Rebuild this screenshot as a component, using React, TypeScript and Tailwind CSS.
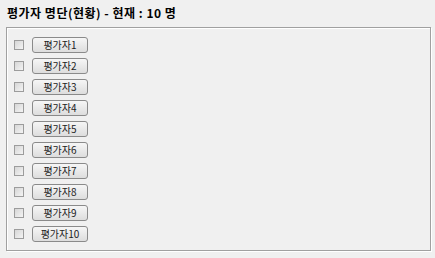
const evaluators = Array.from({ length: 10 }, (_, i) => `평가자${i + 1}`);

export default function App() {
  return (
    <div
      className="h-[258px] w-[435px] bg-[#f0f0f0] text-black"
      style={{ fontFamily: '"Noto Sans CJK KR", "Liberation Sans", sans-serif' }}
    >
      <div className="pl-[7px] pt-[5px] text-[12px] font-bold leading-[16px] tracking-[0.5px]">
        평가자 명단(현황) - 현재 : 10 명
      </div>
      <div className="ml-[6px] mt-[6px] h-[224px] w-[425px] border border-[#a0a0a0] shadow-[inset_1px_1px_0_#ffffff,1px_1px_0_#ffffff]">
        <div className="flex flex-col gap-[5px] pl-[7px] pt-[9px]">
          {evaluators.map((name) => (
            <div key={name} className="flex h-[16px] items-center">
              <span className="h-[10px] w-[10px] border border-[#9c9c9c] bg-gradient-to-br from-[#d6d6d6] to-[#f4f4f4]" />
              <button
                type="button"
                className="ml-[8px] h-[16px] w-[56px] rounded-[3px] border border-[#8a8a8a] bg-gradient-to-b from-[#f6f6f6] to-[#dddddd] text-[10px] leading-[14px] text-[#222]"
              >
                {name}
              </button>
            </div>
          ))}
        </div>
      </div>
    </div>
  );
}
